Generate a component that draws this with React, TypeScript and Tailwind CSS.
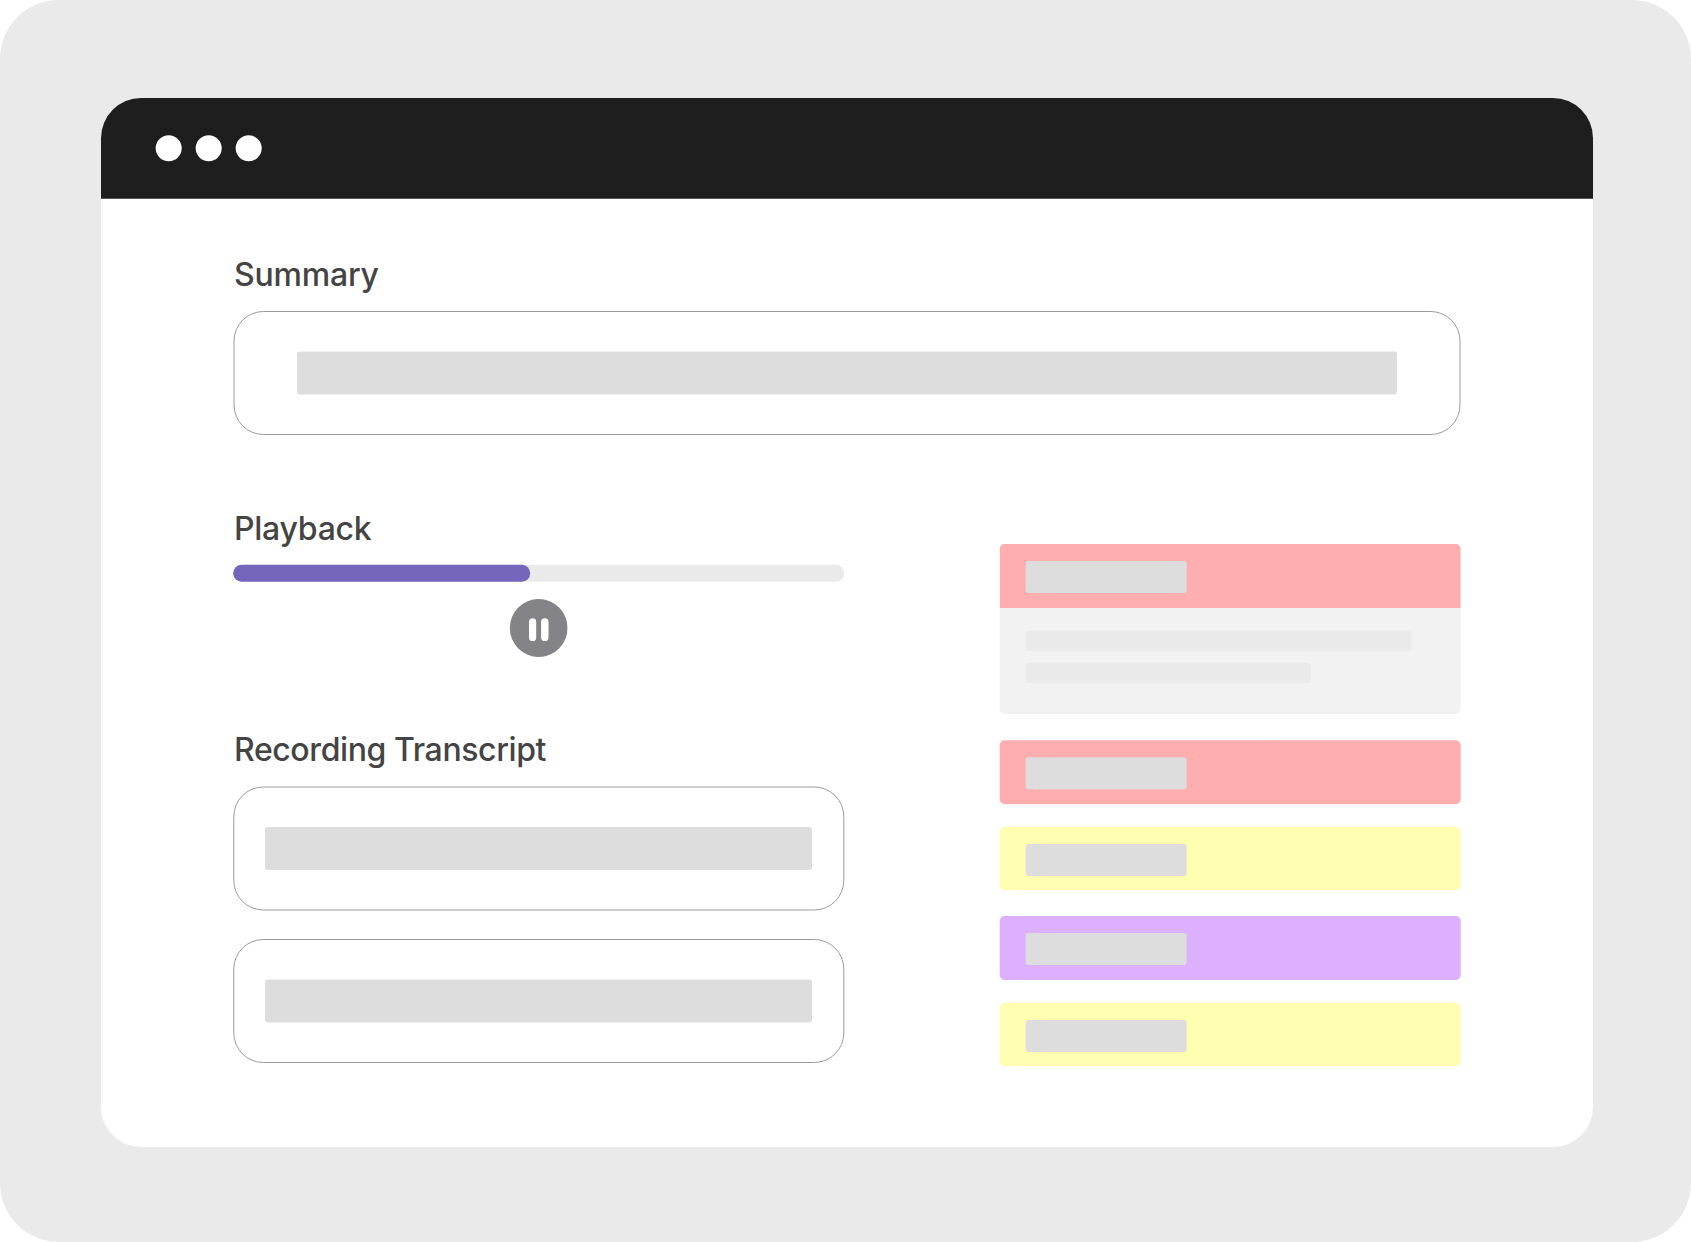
import React from "react";

const headingClass =
  "pl-px translate-y-px font-['Inter','Liberation_Sans',sans-serif] text-[32px] leading-[40px] font-medium whitespace-nowrap text-[#444444]";

function Dot() {
  return <span className="size-[26px] translate-x-[-0.3px] translate-y-[0.3px] rounded-full bg-white" />;
}

function TextCard({ className, barClass }: { className: string; barClass: string }) {
  return (
    <div className={`flex h-[124px] justify-center rounded-[30px] border border-[#9b9b9b] ${className}`}>
      <div className={`mt-[39px] h-[43px] rounded-[3px] bg-[#dddddd] ${barClass}`} />
    </div>
  );
}

function Tag({ className }: { className: string }) {
  return (
    <div className={`flex shrink-0 pt-[17px] pl-[25.6px] ${className}`}>
      <div className="h-8 w-[161.4px] rounded-[3px] bg-[#dddddd]" />
    </div>
  );
}

export default function App() {
  return (
    <div className="h-[1242px] w-[1691px] overflow-hidden bg-white">
      <div className="h-[1241.5px] rounded-[59px] bg-[#eaeaea] pt-[98px] pl-[101px]">
        <div className="h-[1048.5px] w-[1492px] overflow-hidden rounded-[40px] bg-white">
          <header className="flex h-[101px] items-center gap-[14px] border-b border-[#565656] bg-[#1e1e1e] pl-[55px]">
            <Dot />
            <Dot />
            <Dot />
          </header>

          <main className="pl-[132px]">
            <section className="pt-[55px]">
              <h2 className={`${headingClass} tracking-[-0.2px]`}>Summary</h2>
              <TextCard
                className="mt-[17px] w-[1227px] translate-x-[0.5px]"
                barClass="w-[1100px] translate-x-[-0.5px] translate-y-[0.4px]"
              />
            </section>

            <div className="flex">
              <div className="w-[611px]">
                <section className="pt-[73px]">
                  <h2 className={`${headingClass} tracking-[-0.25px]`}>Playback</h2>
                  <div className="mt-[17px] h-[17px] translate-x-[0.2px] translate-y-[-0.2px] rounded-full bg-[#eaeaea]">
                    <div className="h-full w-[297px] rounded-full bg-[#7566bb]" />
                  </div>
                  <button
                    aria-label="Pause"
                    className="mt-[17px] ml-[277px] block size-[58px] translate-x-[-0.3px]"
                  >
                    <svg viewBox="0 0 58 58" className="size-full">
                      <circle cx="29" cy="29" r="28.9" fill="#838388" />
                      <rect x="19.3" y="19.2" width="7.2" height="22.8" rx="3.6" fill="#fff" />
                      <rect x="31.4" y="19.2" width="7.4" height="22.8" rx="3.6" fill="#fff" />
                    </svg>
                  </button>
                </section>

                <section className="pt-[72px]">
                  <h2 className={`${headingClass} tracking-[-0.4px]`}>Recording Transcript</h2>
                  <TextCard
                    className="mt-[17px] w-[610.5px] translate-x-[0.3px] translate-y-[0.5px]"
                    barClass="w-[547px] translate-x-[-0.3px] translate-y-[0.5px]"
                  />
                  <TextCard
                    className="mt-[29px] w-[610.5px] translate-x-[0.3px]"
                    barClass="w-[547px] translate-x-[-0.3px] translate-y-[0.4px]"
                  />
                </section>
              </div>

              <aside className="mt-[109px] ml-[156px] flex w-[461px] translate-x-[-0.3px] flex-col">
                <div className="h-[170px] shrink-0 overflow-hidden rounded-[5px] bg-[#f2f2f2]">
                  <Tag className="h-16 bg-[#ffaeb0]" />
                  <div className="mt-[23px] ml-[25.6px] h-5 w-[386px] rounded-[3px] bg-[#eaeaea]" />
                  <div className="mt-3 ml-[25.6px] h-5 w-[285px] rounded-[3px] bg-[#eaeaea]" />
                </div>
                <Tag className="mt-[26px] h-16 translate-y-[0.3px] rounded-[5px] bg-[#ffaeb0]" />
                <Tag className="mt-[23px] h-[63px] rounded-[5px] bg-[#fffdb0]" />
                <Tag className="mt-[26px] h-16 rounded-[5px] bg-[#dcafff]" />
                <Tag className="mt-[23px] h-[63px] rounded-[5px] bg-[#fffdb0]" />
              </aside>
            </div>
          </main>
        </div>
      </div>
    </div>
  );
}
